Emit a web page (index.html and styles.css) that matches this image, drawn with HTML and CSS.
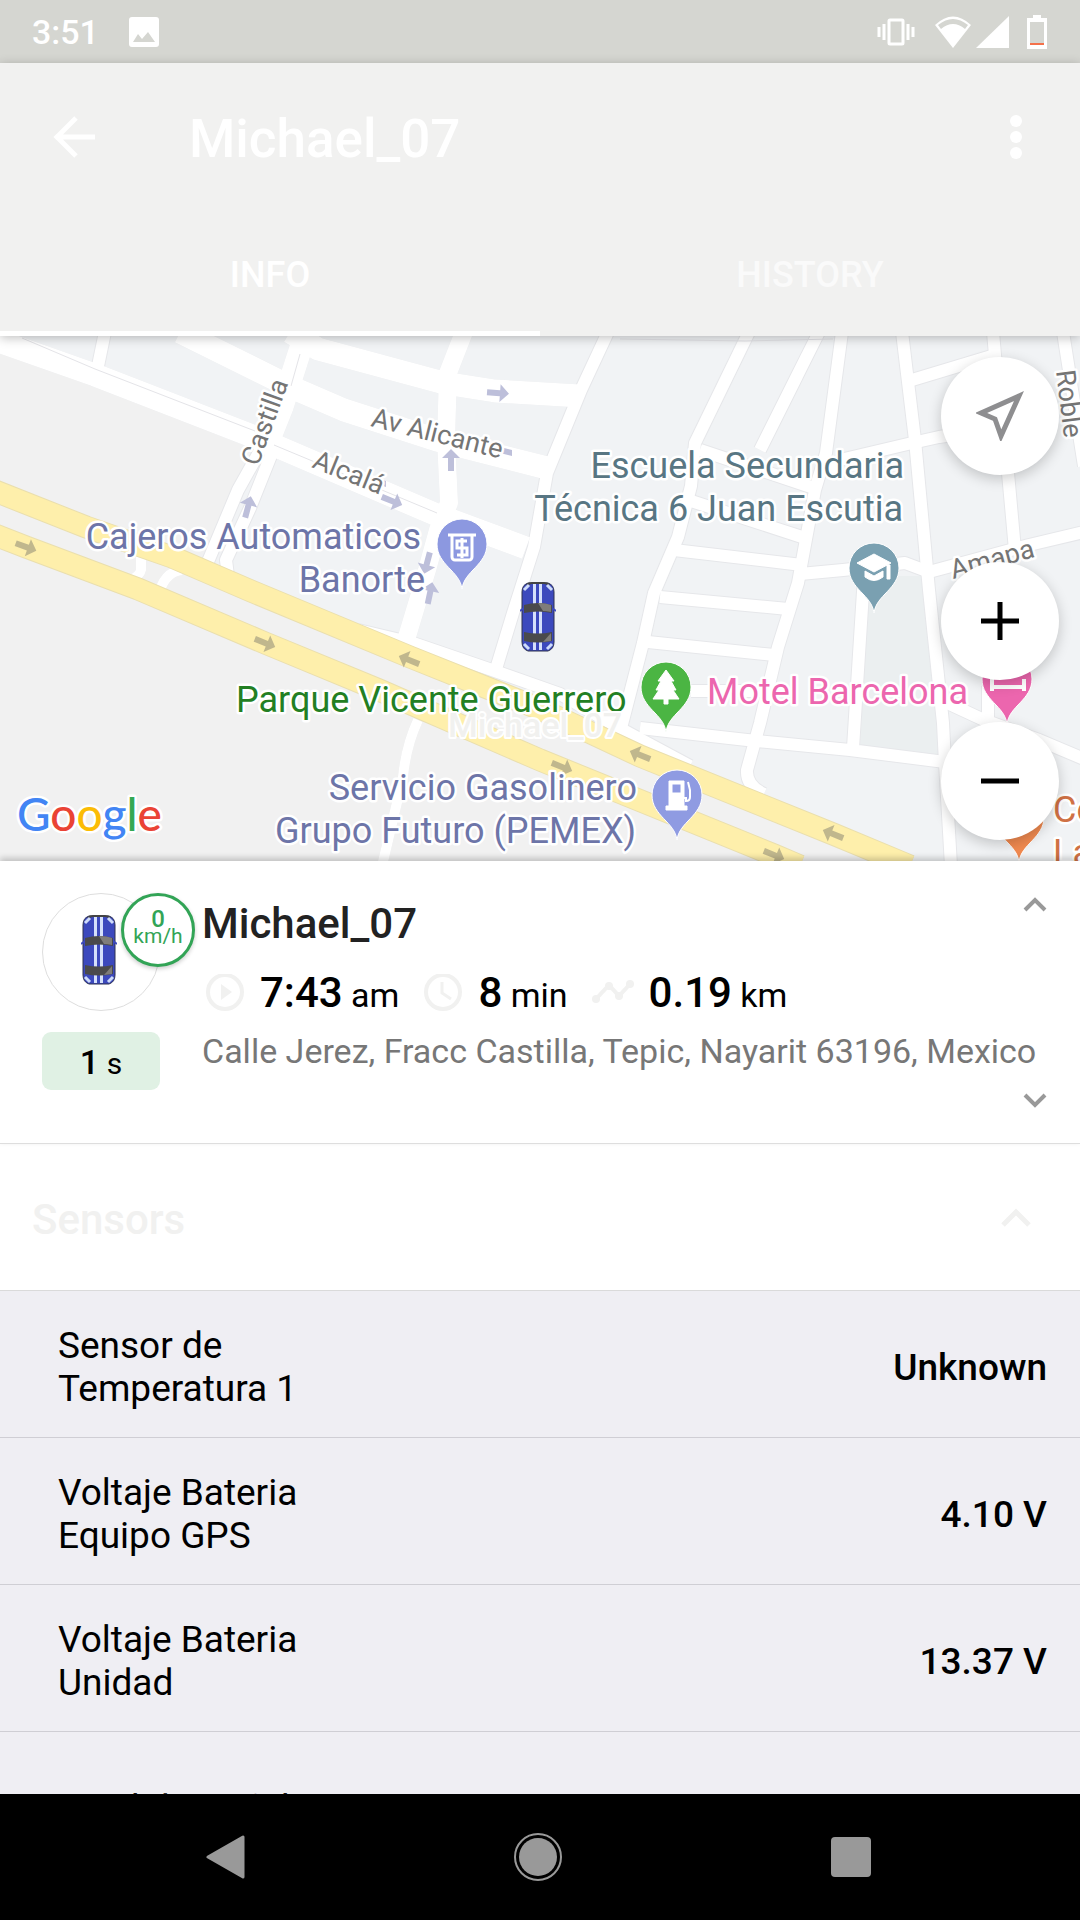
FILE: index.html
```html
<!DOCTYPE html>
<html lang="en">
<head>
    <meta charset="UTF-8">
    <meta name="viewport" content="width=device-width, initial-scale=1.0">
    <title>Michael_07</title>
    <link rel="stylesheet" href="styles.css">
</head>
<body>
    <!-- Shared car drawing -->
    <svg class="defs" aria-hidden="true">
        <symbol id="car" viewBox="0 0 36 70">
            <path d="M8 1h20q6 2 6 9v50q0 7-6 9H8q-6-2-6-9V10q0-7 6-9z" fill="#3c49bd" stroke="#2e3350" stroke-width="1"/>
            <path d="M7 3Q9 1 12 1h12q3 0 5 2" fill="none" stroke="#444" stroke-width="2"/>
            <path d="M4 8l5-5M32 8l-5-5M4 62l5 5M32 62l-5 5" stroke="#cfdcfa" stroke-width="3"/>
            <path d="M13 2h3v66h-3zM19 2h3v66h-3z" fill="#d5e0fb"/>
            <path d="M0 29l4-3M36 29l-4-3" stroke="#3c49bd" stroke-width="2"/>
            <path d="M4 23q14-4 28 0v8q-14-3-28 0z" fill="#4a4a4c"/>
            <path d="M18 21q8 0 13 2v7q-5-1-8-1z" fill="#7f7d7a"/>
            <path d="M4 50q14 3 28 0v9q-14 3-28 0z" fill="#4a4a4c"/>
            <path d="M31 51v8l-8 1z" fill="#7f7d7a"/>
        </symbol>
    </svg>

    <div class="screen">
        <div class="status-bar">
            <span class="time">3:51</span>
            <svg class="picture" width="30" height="30" viewBox="0 0 30 30"><path fill="#fff" fill-rule="evenodd" d="M3 0h24a3 3 0 0 1 3 3v24a3 3 0 0 1-3 3H3a3 3 0 0 1-3-3V3a3 3 0 0 1 3-3zM4 25h22l-7-10-6 7-4-5z"/></svg>
            <div class="status-icons">
                <svg width="38" height="34" viewBox="0 0 38 34" fill="none" stroke="#fff"><rect x="12" y="5" width="14" height="24" rx="1" stroke-width="3"/><path d="M7 9v16M31 9v16M2 12v10M36 12v10" stroke-width="3"/></svg>
                <svg class="wifi" width="40" height="34" viewBox="0 0 40 34"><path d="M20 33L2 10q18-17 36 0z" fill="#fff"/><path d="M5 10q15-12 30 0l-3 4q-12-10-24 0z" fill="#d5d6d1"/></svg>
                <svg width="33" height="34" viewBox="0 0 33 34"><path d="M33 1v32H0z" fill="#fff"/></svg>
                <svg class="battery" width="20" height="34" viewBox="0 0 20 34"><path d="M6 0h8v3h6v31H0V3h6z" fill="#fff"/><path d="M3 7h14v21H3z" fill="#d5d6d1"/><path d="M3 28h14v2H3z" fill="#f4714a"/></svg>
            </div>
        </div>

        <header class="app-bar">
            <div class="toolbar">
                <button class="icon-btn" aria-label="Back">
                    <svg width="42" height="42" viewBox="0 0 42 42" fill="none" stroke="#fff" stroke-width="5"><path d="M42 21H4M23 2L4 21l19 19"/></svg>
                </button>
                <h1>Michael_07</h1>
                <button class="icon-btn" aria-label="More options">
                    <svg width="12" height="44" viewBox="0 0 12 44" fill="#fff"><circle cx="6" cy="6" r="6"/><circle cx="6" cy="22" r="6"/><circle cx="6" cy="38" r="6"/></svg>
                </button>
            </div>
            <nav class="tabs">
                <button class="tab active">INFO</button>
                <button class="tab">HISTORY</button>
            </nav>
        </header>

        <div class="map">
            <svg class="map-canvas" viewBox="0 0 1080 525" preserveAspectRatio="xMidYMid slice">
                <defs>
                    <path id="pin" d="M0 45C-2 27-25 21-25 0a25 25 0 0 1 50 0C25 21 2 27 0 45z"/>
                    <path id="arrow" d="M-11-3H2v-6L11 0 2 9V3h-13z"/>
                    <g id="streets">
                        <path class="wide" d="M-10 2L95 39 255 101 437 179 526 212"/>
                        <path class="wide" d="M180-4L293 52 344 74 437 104 547 132"/>
                        <path class="wide" d="M290-4L318 13 444 47 495 55 580 60"/>
                        <path class="wide" d="M306-4L296 27 282 71 266 111"/>
                        <path d="M262 111L238 154 207 228M274 112L250 172 226 224 228 240"/>
                        <path class="mid" d="M464-4L448 37 446 104 449 167 438 194 427 234 406 304"/>
                        <path d="M608-4L581 54 547 137 534 211 513 277 496 333"/>
                        <path d="M105-4L98 30"/>
                        <path d="M358 294L413 307 492 334 560 358 623 394 690 430"/>
                        <path class="thin" d="M418 384Q406 410 403 441L382 530M141 214V234Q140 240 127 246M182 234Q163 236 158 262"/>
                        <path d="M749-4L695 107 691 150 678 201 654 257 643 307 620 396"/>
                        <path d="M819-4L760 114"/>
                        <path d="M842-4L826 117 815 154 798 247 778 311 760 387 747 434Q746 450 764 458"/>
                        <path d="M902-4L915 104 929 254 943 387 945 427 951 530"/>
                        <path d="M993-4L995 19 912 44M995 19L1008 137 1015 214"/>
                        <path d="M1000 92L939 101 912 107 840 124 826 140"/>
                        <path d="M1063-4L1084 130"/>
                        <path d="M1084 196L1029 209 929 236 905 227 843 234 800 238"/>
                        <path d="M674 214L802 229M700 114L817 153M688 164L802 201M660 261L788 273M648 306L774 319M691 355H770"/>
                        <path d="M640 392L747 404 850 414 945 426M864 240L853 412"/>
                        <path d="M943 365L984 384 1039 404 1084 423M988 386V350"/>
                    </g>
                </defs>
                <rect width="1080" height="525" fill="#f1f3f5"/>
                <path d="M0 10L250 112 205 228 895 525H0z" fill="#f1f1f1"/>
                <path d="M870 240H930L940 420 860 412z" fill="#ebeff0"/>
                <use href="#streets" class="street-edge"/>
                <use href="#streets" class="street"/>
                <path d="M22 2L95 33 255 95M274 109L437 177M291 50L300 18M620 3L745 5 833 3" fill="none" stroke="#e4e4e8" stroke-width="1"/>
                <g class="highway-edge"><path id="north" d="M-10 153L86 191 172 221 251 255 410 321 540 373 640 420 833 498 910 530"/><path id="south" d="M-10 197L26 211 138 253 265 307 379 354 540 424 774 519 800 530"/></g>
                <g class="highway"><use href="#north"/><use href="#south"/></g>

                <g fill="#bdbfda">
                    <use href="#arrow" transform="translate(498 57) rotate(4)"/>
                    <use href="#arrow" transform="translate(392 165) rotate(22)"/>
                    <use href="#arrow" transform="translate(248 171) rotate(-75)"/>
                    <use href="#arrow" transform="translate(451 124) rotate(-90)"/>
                    <use href="#arrow" transform="translate(427 227) rotate(105)"/>
                    <use href="#arrow" transform="translate(430 257) rotate(-78)"/>
                    <path d="M500 111l12 3v6l-12-3zM378 142l8 3v6l-8-3z"/>
                </g>
                <g fill="#c0b78d">
                    <use href="#arrow" transform="translate(26 211) rotate(20)"/>
                    <use href="#arrow" transform="translate(265 307) rotate(22)"/>
                    <use href="#arrow" transform="translate(409 324) rotate(202)"/>
                    <use href="#arrow" transform="translate(640 419) rotate(202)"/>
                    <use href="#arrow" transform="translate(562 431) rotate(22)"/>
                    <use href="#arrow" transform="translate(833 498) rotate(202)"/>
                    <use href="#arrow" transform="translate(774 519) rotate(22)"/>
                </g>

                <g class="road-name">
                    <text transform="translate(258 131) rotate(-70)">Castilla</text>
                    <text transform="translate(370 90) rotate(14)">Av Alicante</text>
                    <text transform="translate(311 131) rotate(22)">Alcalá</text>
                    <text transform="translate(1056 35) rotate(83)">Roble</text>
                    <text transform="translate(953 243) rotate(-15)">Amapa</text>
                </g>

                <!-- Places -->
                <g class="place">
                    <g fill="#6d75a8" text-anchor="end">
                        <text x="421" y="213">Cajeros Automaticos</text>
                        <text x="425" y="256">Banorte</text>
                        <text x="637" y="464">Servicio Gasolinero</text>
                        <text x="636" y="507">Grupo Futuro (PEMEX)</text>
                    </g>
                    <g fill="#587683" text-anchor="end">
                        <text x="904" y="142">Escuela Secundaria</text>
                        <text x="903" y="185">Técnica 6 Juan Escutia</text>
                    </g>
                    <text x="236" y="376" fill="#237f23">Parque Vicente Guerrero</text>
                    <text x="707" y="368" fill="#ec66ae">Motel Barcelona</text>
                    <text x="1053" y="486" fill="#cf7145">Co</text>
                    <text x="1053" y="529" fill="#cf7145">La</text>
                </g>

                <g class="pins">
                    <g transform="translate(462 208)">
                        <use href="#pin" fill="#8c98e0"/>
                        <path d="M-14-9h28M-10-9v22a3 3 0 0 0 3 3H7a3 3 0 0 0 3-3V-9M5-3H-5V4H5v7H-5M0-6v20" fill="none" stroke="#fff" stroke-width="3"/>
                    </g>
                    <g transform="translate(874 232)">
                        <use href="#pin" fill="#7aa0b1"/>
                        <path d="M0-14L17-5 0 4-17-5zM13-3h3V11h-3zM-9 3L0 8 9 3V9Q0 16-9 9z" fill="#fff"/>
                    </g>
                    <g transform="translate(666 351)">
                        <use href="#pin" fill="#4bb543"/>
                        <path d="M0-17L8-6H5L10 3H7l6 9H2v5h-4v-5h-11l6-9h-3l5-9h-3z" fill="#fff"/>
                    </g>
                    <g transform="translate(677 459)">
                        <use href="#pin" fill="#8f9be2"/>
                        <path d="M-8-14H7V11h3v4h-21v-4h3zM-5-11V-2H4v-9z" fill="#fff" fill-rule="evenodd"/>
                        <path d="M7 3h2V6q4 0 4-4V-5l-2-8" fill="none" stroke="#fff" stroke-width="2"/>
                    </g>
                    <g transform="translate(1007 343)">
                        <use href="#pin" fill="#ec66ae"/>
                        <path d="M-15-8v20M-15 8h32M17 0v12" stroke="#fff" stroke-width="4"/>
                    </g>
                    <use href="#pin" x="1019" y="481" fill="#f18a50"/>
                </g>

                <use href="#car" x="520" y="246" width="36" height="70"/>
                <text class="unit-label" x="535" y="401">Michael_07</text>
                <text class="google" x="17" y="495"><tspan fill="#4285f4">G</tspan><tspan fill="#ea4335">o</tspan><tspan fill="#fbbc05">o</tspan><tspan fill="#4285f4">g</tspan><tspan fill="#34a853">l</tspan><tspan fill="#ea4335">e</tspan></text>
            </svg>

            <div class="map-controls">
                <button class="round-btn locate" aria-label="My location">
                    <svg width="48" height="50" viewBox="0 0 48 50"><path d="M43 5L5 22 19 28 25 45z" fill="none" stroke="#8e8e90" stroke-width="5"/></svg>
                </button>
                <button class="round-btn" aria-label="Zoom in">
                    <svg width="38" height="38" viewBox="0 0 38 38"><path d="M0 19h38M19 0v38" stroke="#000" stroke-width="5"/></svg>
                </button>
                <button class="round-btn" aria-label="Zoom out">
                    <svg width="38" height="38" viewBox="0 0 38 38"><path d="M0 19h38" stroke="#000" stroke-width="5"/></svg>
                </button>
            </div>
        </div>

        <section class="unit">
            <div class="unit-side">
                <div class="avatar">
                    <svg width="36" height="70"><use href="#car"/></svg>
                    <div class="speed"><b>0</b><span>km/h</span></div>
                </div>
                <div class="age"><b>1</b> s</div>
            </div>
            <div class="unit-info">
                <div class="unit-head">
                    <h2>Michael_07</h2>
                    <svg class="chevron" width="24" height="24" viewBox="0 0 24 24"><path d="M2 17l10-10 10 10"/></svg>
                </div>
                <div class="stats">
                    <div class="stat">
                        <svg width="40" height="40" viewBox="0 0 40 40"><circle cx="20" cy="18" r="17" fill="none" stroke="#f1f1f0" stroke-width="4"/><path d="M16 10l11 8-11 8z" fill="#f1f1f0"/></svg>
                        <p><b>7:43</b> am</p>
                    </div>
                    <div class="stat">
                        <svg width="40" height="40" viewBox="0 0 40 40" fill="none" stroke="#f1f1f0"><circle cx="20" cy="18" r="17" stroke-width="4"/><path d="M19 8v11l9 6" stroke-width="3"/></svg>
                        <p><b>8</b> min</p>
                    </div>
                    <div class="stat">
                        <svg width="42" height="40" viewBox="0 0 42 40" fill="#f1f1f0"><path d="M4 25L17 11 27 22 38 10" fill="none" stroke="#f1f1f0" stroke-width="4"/><circle cx="4" cy="25" r="4"/><circle cx="17" cy="12" r="4"/><circle cx="27" cy="22" r="4"/><circle cx="38" cy="10" r="4"/></svg>
                        <p><b>0.19</b> km</p>
                    </div>
                </div>
                <p class="address">Calle Jerez, Fracc Castilla, Tepic, Nayarit 63196, Mexico</p>
                <svg class="chevron down" width="24" height="24" viewBox="0 0 24 24"><path d="M2 7l10 10L22 7"/></svg>
            </div>
        </section>

        <section class="sensors">
            <button class="sensors-head">
                Sensors
                <svg width="32" height="24" viewBox="0 0 32 24"><path d="M3 18L16 5l13 13" fill="none" stroke="#f1f1f0" stroke-width="5"/></svg>
            </button>
            <ul>
                <li><span>Sensor de Temperatura 1</span><b>Unknown</b></li>
                <li><span>Voltaje Bateria Equipo GPS</span><b>4.10 V</b></li>
                <li><span>Voltaje Bateria Unidad</span><b>13.37 V</b></li>
                <li><span>Nivel de Señal</span></li>
            </ul>
        </section>

        <nav class="system-nav">
            <button aria-label="Back"><svg width="40" height="44" viewBox="0 0 40 44"><path d="M38 2v40L3 22z" fill="#999" stroke="#999" stroke-width="3" stroke-linejoin="round"/></svg></button>
            <button aria-label="Home"><svg width="48" height="48" viewBox="0 0 48 48"><circle cx="24" cy="24" r="23" fill="none" stroke="#999" stroke-width="2"/><circle cx="24" cy="24" r="19" fill="#999"/></svg></button>
            <button aria-label="Recent apps"><svg width="40" height="40"><rect width="40" height="40" rx="4" fill="#999"/></svg></button>
        </nav>
    </div>
</body>
</html>
```
FILE: styles.css
```css
* {
    box-sizing: border-box;
}
body {
    font-family: Roboto, "Liberation Sans", sans-serif;
    margin: 0;
    background-color: #fff;
    color: #000;
}
h1, h2, p, ul {
    margin: 0;
    padding: 0;
}
h1, h2, b {
    font-weight: 500;
}
button {
    font-family: inherit;
    border: none;
    background: none;
    padding: 0;
    cursor: pointer;
}
svg {
    display: block;
    flex-shrink: 0;
}
.defs {
    position: absolute;
    width: 0;
    height: 0;
}
.screen {
    display: flex;
    flex-direction: column;
    height: 100vh;
}

/* Status bar */
.status-bar {
    display: flex;
    align-items: center;
    height: 63px;
    flex-shrink: 0;
    padding: 0 33px 0 32px;
    background-color: #d5d6d1;
    color: #fff;
}
.time {
    font-size: 34px;
    font-weight: 500;
}
.picture {
    margin-left: 30px;
}
.status-icons {
    display: flex;
    margin-left: auto;
}
.wifi {
    margin: 0 3px 0 18px;
}
.battery {
    margin-left: 18px;
}

/* App bar */
.app-bar {
    position: relative;
    z-index: 1;
    flex-shrink: 0;
    background-color: #f1f1f0;
    color: #fff;
    box-shadow: 0 2px 10px rgba(0, 0, 0, 0.25);
}
.toolbar {
    display: flex;
    align-items: center;
    height: 147px;
    padding: 0 58px 0 53px;
}
.toolbar h1 {
    flex: 1;
    margin-left: 94px;
    padding-top: 4px;
    font-size: 53px;
}
.tabs {
    display: flex;
}
.tab {
    flex: 1;
    height: 126px;
    padding-top: 4px;
    font-size: 36px;
    font-weight: 500;
    color: #fafafa;
}
.tab.active {
    color: #fff;
    box-shadow: inset 0 -5px #fff;
}

/* Map */
.map {
    position: relative;
    height: 525px;
    flex-shrink: 0;
    overflow: hidden;
}
.map-canvas {
    width: 100%;
    height: 100%;
}
.street, .street-edge {
    fill: none;
    stroke-linejoin: round;
    stroke: #fff;
    stroke-width: 12px;
}
.street-edge {
    stroke: #e6e7ea;
    stroke-width: 14px;
}
.wide {
    stroke-width: 23px;
}
.mid {
    stroke-width: 18px;
}
.thin {
    stroke-width: 10px;
}
.highway, .highway-edge {
    fill: none;
    stroke: #feefab;
    stroke-width: 21px;
}
.highway-edge {
    stroke: #eadfae;
    stroke-width: 23px;
}
.map-canvas text {
    paint-order: stroke;
    stroke: #fff;
    stroke-width: 5px;
    stroke-linejoin: round;
}
.place {
    font-size: 36px;
}
.road-name {
    font-size: 27px;
    fill: #757575;
}
.pins {
    stroke: #fff;
    stroke-width: 1px;
}
.map-canvas .unit-label {
    font-size: 34px;
    font-weight: 500;
    fill: #f1f1ef;
    stroke-width: 4px;
    text-anchor: middle;
}
.google {
    font-family: Lato, sans-serif;
    font-size: 46px;
    font-weight: 500;
}
.map-controls {
    position: absolute;
    top: 21px;
    right: 21px;
    display: flex;
    flex-direction: column;
    gap: 42px;
}
.round-btn {
    display: flex;
    align-items: center;
    justify-content: center;
    width: 118px;
    height: 118px;
    border-radius: 50%;
    background-color: #fff;
    box-shadow: 0 4px 14px rgba(0, 0, 0, 0.2);
}
.locate {
    margin-bottom: 45px;
}

/* Unit card */
.unit {
    position: relative;
    display: flex;
    flex-shrink: 0;
    padding: 32px 33px 31px 42px;
    border-bottom: 1px solid #dedede;
    background-color: #fff;
    box-shadow: 0 -3px 6px rgba(0, 0, 0, 0.2);
}
.unit-side {
    width: 118px;
    flex-shrink: 0;
}
.avatar {
    position: relative;
    display: flex;
    align-items: center;
    justify-content: center;
    height: 118px;
    padding: 0 4px 4px 0;
    border: 1px solid #dedede;
    border-radius: 50%;
}
.speed {
    position: absolute;
    top: -1px;
    right: -36px;
    display: flex;
    flex-direction: column;
    align-items: center;
    justify-content: center;
    width: 74px;
    height: 74px;
    padding-bottom: 4px;
    border: 3px solid #32a456;
    border-radius: 50%;
    background-color: #fff;
    color: #32a456;
    font-size: 21px;
    line-height: 17px;
    box-shadow: 0 2px 4px rgba(0, 0, 0, 0.2);
}
.speed b {
    font-size: 24px;
}
.age {
    margin-top: 21px;
    padding-top: 4px;
    border-radius: 9px;
    background-color: #e0f1e4;
    font-size: 30px;
    line-height: 52px;
    text-align: center;
}
.age b {
    font-size: 34px;
}
.unit-info {
    flex: 1;
    min-width: 0;
    margin-left: 42px;
}
.unit-head {
    display: flex;
    justify-content: space-between;
}
.unit-head h2 {
    padding-top: 7px;
    font-size: 42px;
    line-height: 48px;
    color: #222;
}
.chevron {
    fill: none;
    stroke: #999;
    stroke-width: 4px;
}
.stats {
    display: flex;
    gap: 24px;
    margin: 21px 0 12px 3px;
}
.stat {
    display: flex;
    align-items: center;
    gap: 15px;
    font-size: 34px;
    line-height: 48px;
}
.stat b {
    font-size: 42px;
}
.address {
    font-size: 34px;
    line-height: 40px;
    color: #777;
    white-space: nowrap;
}
.down {
    margin: 17px 0 0 auto;
}

/* Sensors */
.sensors {
    flex: 1;
    min-height: 0;
    overflow: hidden;
    background-color: #efeef3;
}
.sensors-head {
    display: flex;
    align-items: center;
    justify-content: space-between;
    width: 100%;
    height: 147px;
    padding: 4px 48px 0 32px;
    border-bottom: 1px solid #dadada;
    background-color: #fff;
    font-size: 42px;
    font-weight: 500;
    color: #f1f1f0;
}
.sensors ul {
    list-style-type: none;
}
.sensors li {
    display: flex;
    align-items: center;
    justify-content: space-between;
    min-height: 147px;
    padding: 33px 33px 27px 58px;
    border-bottom: 1px solid #cfced4;
    font-size: 37px;
    line-height: 43px;
}
.sensors li span {
    width: 260px;
}

/* Android navigation */
.system-nav {
    display: flex;
    height: 126px;
    flex-shrink: 0;
    padding: 0 72px 0 68px;
    background-color: #000;
}
.system-nav button {
    flex: 1;
    display: flex;
    align-items: center;
    justify-content: center;
}
```
